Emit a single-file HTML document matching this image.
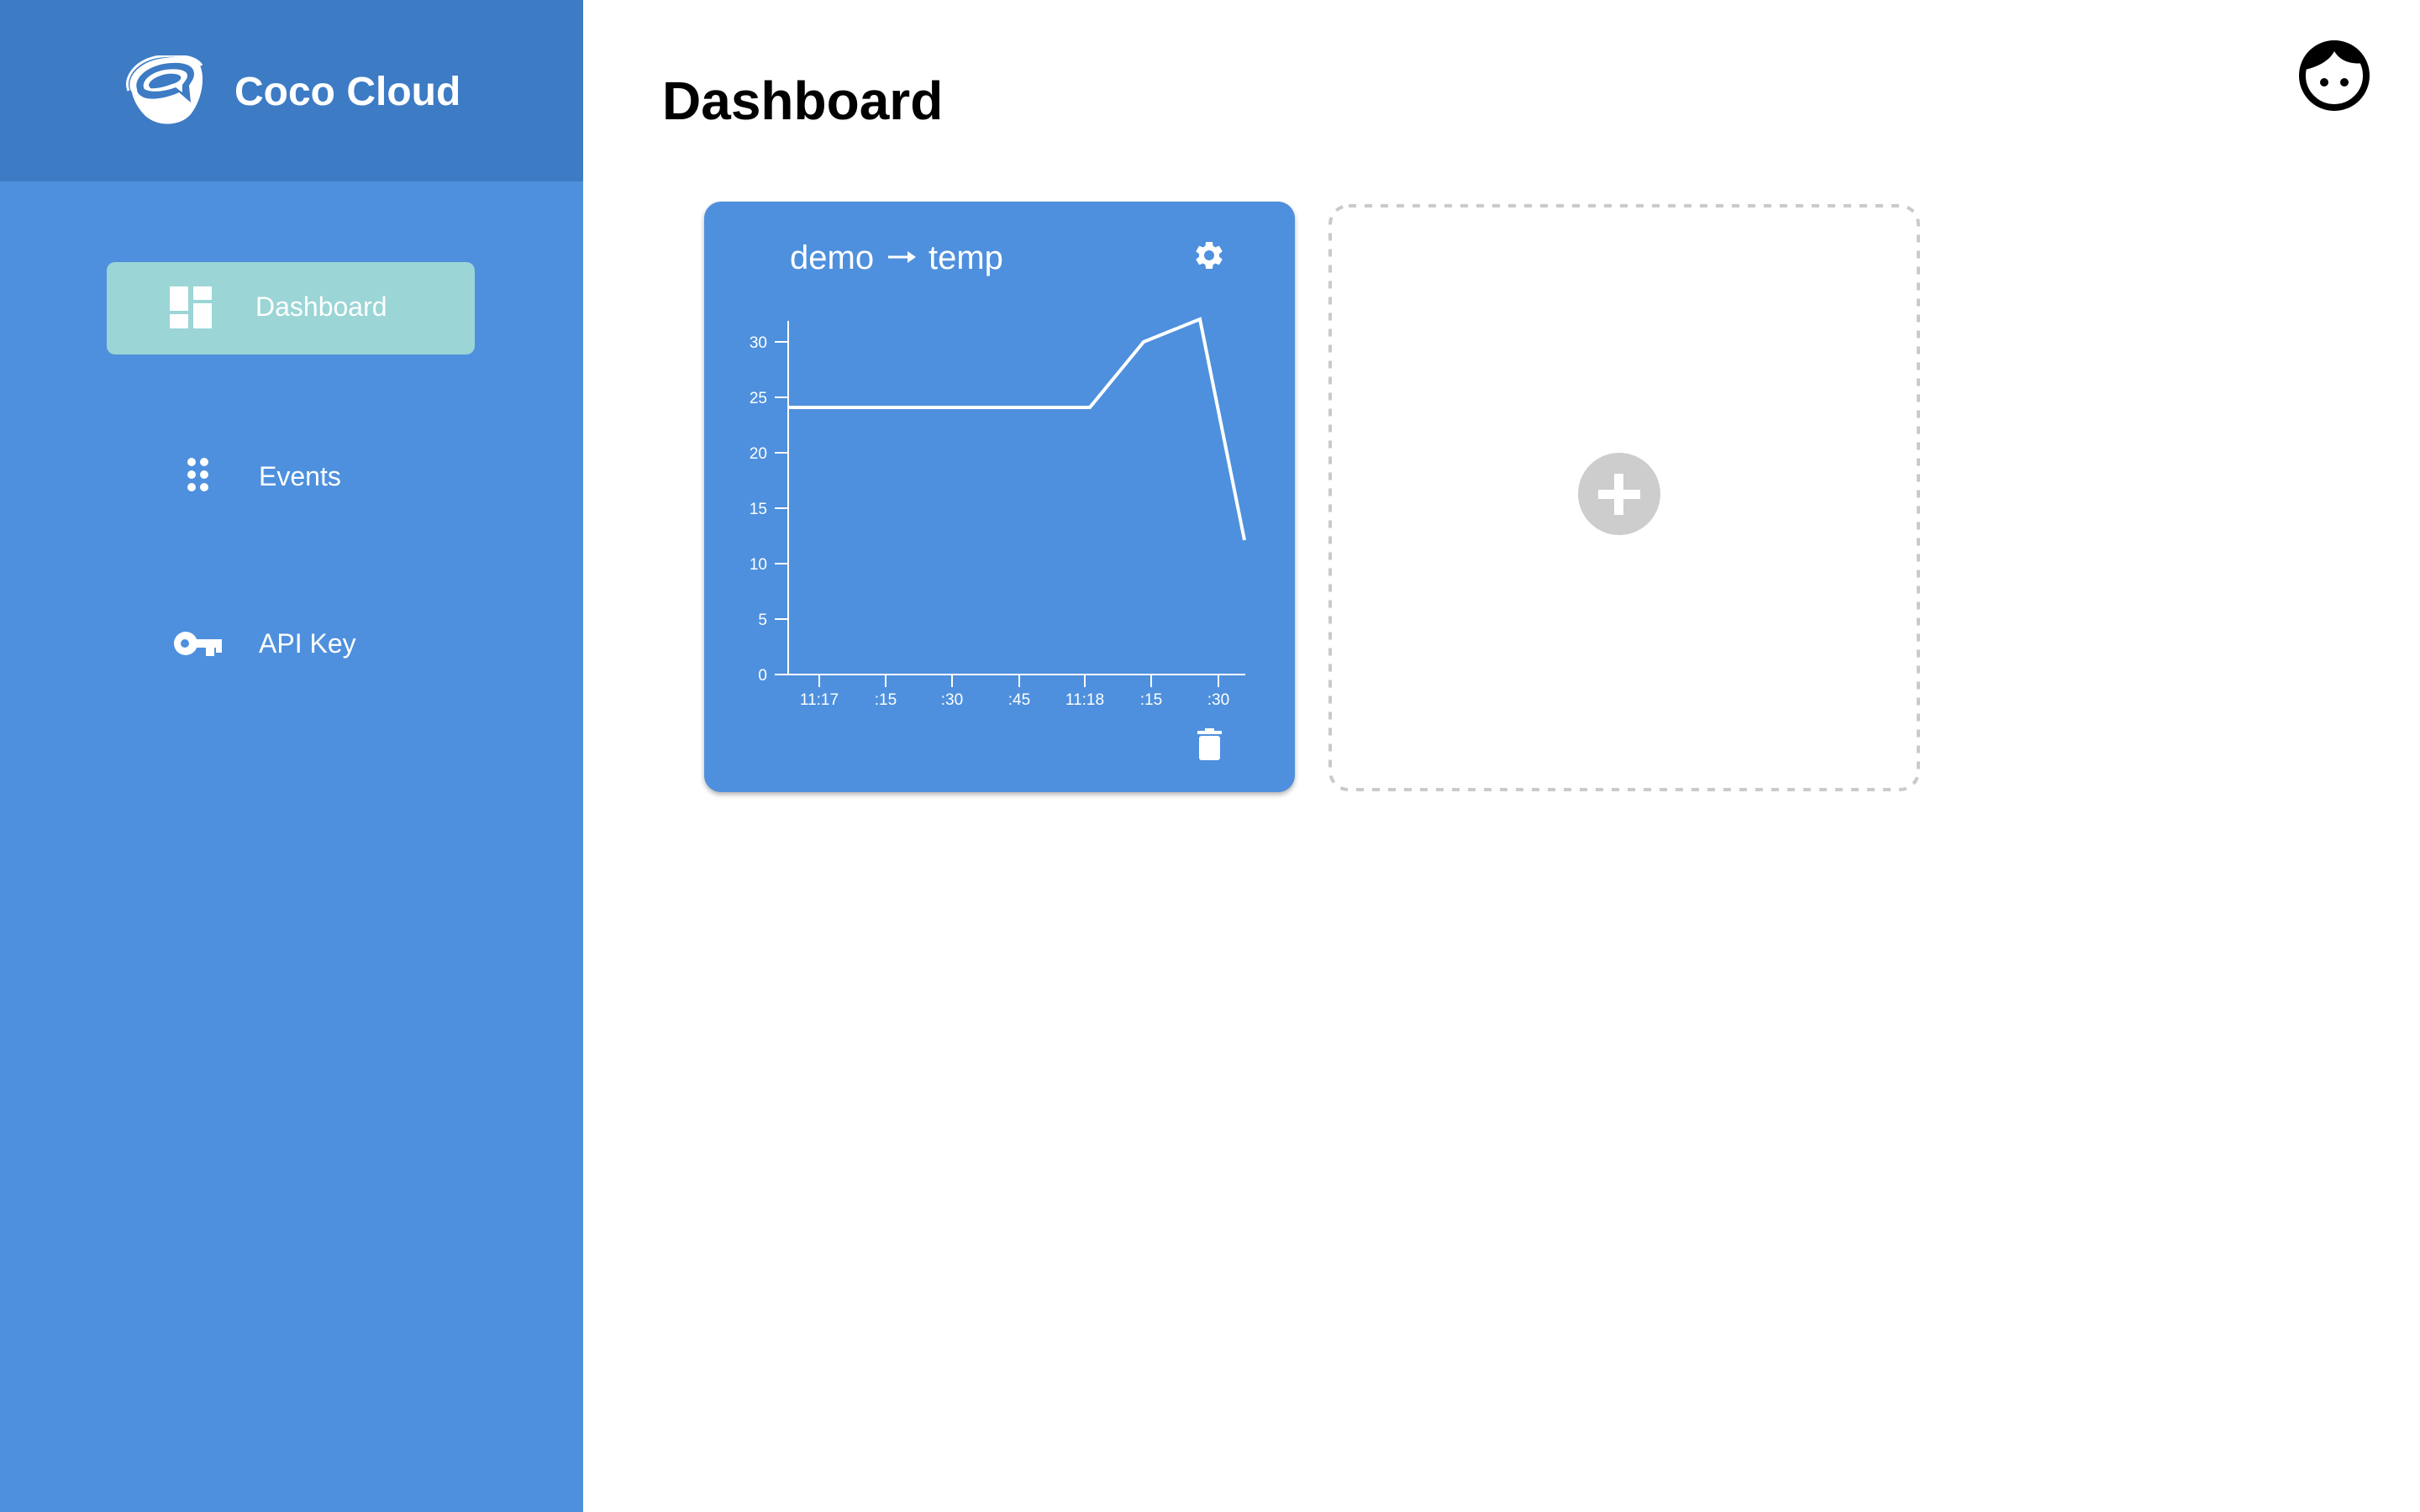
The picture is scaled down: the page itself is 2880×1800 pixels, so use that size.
<!DOCTYPE html>
<html><head><meta charset="utf-8"><style>
*{margin:0;padding:0;box-sizing:border-box}
html,body{width:2880px;height:1800px;overflow:hidden;background:#fff;font-family:"Liberation Sans",sans-serif}
.side{position:absolute;left:0;top:0;width:694px;height:1800px;background:#4e90dd}
.head{position:absolute;left:0;top:0;width:694px;height:216px;background:#3d7bc4}
.brand{position:absolute;left:279px;top:75px;color:#fff;font-weight:bold;font-size:48px;line-height:70px}
.btn{position:absolute;left:127px;top:312px;width:438px;height:110px;background:#9bd5d6;border-radius:10px}
.nav{position:absolute;color:#fff;font-size:32px;line-height:40px}
h1{position:absolute;left:788px;top:80px;font-size:64px;font-weight:bold;color:#000;line-height:80px}
.card{position:absolute;left:838px;top:240px;width:703px;height:703px;background:#4e90dd;border-radius:20px;box-shadow:0 3px 6px rgba(0,0,0,.3)}
</style></head><body>
<div class="side"></div>
<div class="head"></div>
<svg style="position:absolute;left:145px;top:66px" width="104" height="84" viewBox="0 0 104 84">
<path d="M12 44 C4 32 14 12 40 5 C62 0 84 0 92 10 C100 24 96 52 82 70 C70 84 44 86 28 72 C20 64 14 54 12 44 Z" fill="#fff"/>
<path d="M18 40 C14 28 28 14 50 10 C70 7 86 10 86 22 C86 28 82 32 80 36 L82 56 L68 44 C56 50 36 54 26 50 C20 47 18 44 18 40 Z" fill="#3d7bc4"/>
<path d="M26 38 C24 30 34 20 52 17 C68 15 78 18 78 24 C78 28 74 32 72 35 L72 44 L64 38 C54 42 40 44 32 42 C28 41 26 40 26 38 Z" fill="#fff"/>
<path d="M32 36 C32 30 42 24 54 22 C66 21 72 24 70 28 C68 31 64 33 60 34 C50 38 38 40 34 39 Z" fill="#3d7bc4"/>
<path d="M8 42 C2 28 14 8 40 2 C64 -2 88 0 95 12" fill="none" stroke="#fff" stroke-width="3"/>
</svg>
<div class="brand">Coco Cloud</div>
<div class="btn"></div>
<svg style="position:absolute;left:202px;top:341px" width="52" height="51"><rect x="0" y="0" width="22" height="29" fill="#fff"/><rect x="28" y="0" width="22" height="16" fill="#fff"/><rect x="0" y="33" width="22" height="17" fill="#fff"/><rect x="28" y="20" width="22" height="30" fill="#fff"/></svg>
<div class="nav" style="left:304px;top:345px">Dashboard</div>
<svg style="position:absolute;left:220px;top:542px" width="32" height="46" fill="#fff"><circle cx="8" cy="8" r="5"/><circle cx="23" cy="8" r="5"/><circle cx="8" cy="23" r="5"/><circle cx="23" cy="23" r="5"/><circle cx="8" cy="38" r="5"/><circle cx="23" cy="38" r="5"/></svg>
<div class="nav" style="left:308px;top:547px">Events</div>
<svg style="position:absolute;left:207px;top:752px" width="58" height="30"><circle cx="14" cy="14" r="14" fill="#fff"/><circle cx="13" cy="14" r="5" fill="#4e90dd"/><rect x="20" y="9" width="37" height="10" fill="#fff"/><rect x="38" y="9" width="10" height="20" fill="#fff"/><rect x="50" y="9" width="7" height="16" fill="#fff"/></svg>
<div class="nav" style="left:308px;top:746px">API Key</div>
<h1>Dashboard</h1>
<svg style="position:absolute;left:2735px;top:47px" width="86" height="86" viewBox="0 0 86 86">
<circle cx="43" cy="43" r="38" fill="none" stroke="#000" stroke-width="8"/>
<path d="M5 43 A38 38 0 0 1 78 28 C64 30 50 26 43 14 C38 24 26 32 8 36 Z" fill="#000"/>
<circle cx="31" cy="51" r="5" fill="#000"/><circle cx="55" cy="51" r="5" fill="#000"/>
</svg>
<div class="card"></div>
<div style="position:absolute;left:940px;top:282px;color:#fff;font-size:40px;line-height:50px">demo</div>
<svg style="position:absolute;left:1056px;top:296px" width="36" height="20"><line x1="1" y1="10" x2="30" y2="10" stroke="#fff" stroke-width="3"/><path d="M24 3 L34 10 L24 17 Z" fill="#fff"/></svg>
<div style="position:absolute;left:1105px;top:282px;color:#fff;font-size:40px;line-height:50px">temp</div>
<svg style="position:absolute;left:1419px;top:284px" width="40" height="40" viewBox="0 0 24 24"><path fill="#fff" d="M19.14 12.94c.04-.3.06-.61.06-.94 0-.32-.02-.64-.07-.94l2.030-1.58a.49.49 0 0 0 .12-.61l-1.920-3.32a.488.488 0 0 0-.59-.22l-2.390.96c-.5-.38-1.030-.7-1.620-.94l-.36-2.540a.484.484 0 0 0-.48-.41h-3.840c-.24 0-.43.17-.47.41l-.36 2.540c-.59.24-1.130.57-1.620.94l-2.390-.96c-.22-.08-.47 0-.59.22L2.740 8.870c-.12.21-.08.47.12.61l2.030 1.580c-.05.3-.09.63-.09.94s.02.64.07.94l-2.030 1.580a.49.49 0 0 0-.12.61l1.920 3.320c.12.22.37.29.59.22l2.390-.96c.5.38 1.030.7 1.620.94l.36 2.540c.05.24.24.41.48.41h3.840c.24 0 .44-.17.47-.41l.36-2.540c.59-.24 1.130-.56 1.620-.94l2.390.96c.22.08.47 0 .59-.22l1.920-3.320c.12-.22.07-.47-.12-.61l-2.010-1.580zM12 15.6c-1.980 0-3.600-1.620-3.600-3.600s1.620-3.600 3.600-3.600 3.600 1.620 3.600 3.600-1.620 3.600-3.600 3.600z"/></svg>
<svg style="position:absolute;left:0;top:0" width="2880" height="1800">
<g stroke="#fff" stroke-width="2" fill="none">
<line x1="938" y1="382" x2="938" y2="803"/>
<line x1="922" y1="803" x2="1482" y2="803"/>
<line x1="922" y1="407" x2="938" y2="407"/><line x1="922" y1="473" x2="938" y2="473"/><line x1="922" y1="539" x2="938" y2="539"/><line x1="922" y1="605" x2="938" y2="605"/><line x1="922" y1="671" x2="938" y2="671"/><line x1="922" y1="737" x2="938" y2="737"/>
<line x1="975" y1="803" x2="975" y2="818"/><line x1="1054" y1="803" x2="1054" y2="818"/><line x1="1133" y1="803" x2="1133" y2="818"/><line x1="1213" y1="803" x2="1213" y2="818"/><line x1="1291" y1="803" x2="1291" y2="818"/><line x1="1370" y1="803" x2="1370" y2="818"/><line x1="1450" y1="803" x2="1450" y2="818"/>
<polyline stroke-width="4" points="938,485 1297,485 1361,407 1428,380 1481,643"/>
</g>
<g fill="#fff" font-family="Liberation Sans" font-size="19" text-anchor="end">
<text x="913" y="414">30</text><text x="913" y="480">25</text><text x="913" y="546">20</text><text x="913" y="612">15</text><text x="913" y="678">10</text><text x="913" y="744">5</text><text x="913" y="810">0</text>
</g>
<g fill="#fff" font-family="Liberation Sans" font-size="19" text-anchor="middle">
<text x="975" y="839">11:17</text><text x="1054" y="839">:15</text><text x="1133" y="839">:30</text><text x="1213" y="839">:45</text><text x="1291" y="839">11:18</text><text x="1370" y="839">:15</text><text x="1450" y="839">:30</text>
</g>
<g fill="#fff"><rect x="1425" y="870" width="29" height="4"/><rect x="1434" y="867" width="11" height="4"/><rect x="1427" y="876" width="25" height="29" rx="3"/></g>
<rect x="1583" y="245" width="700" height="695" rx="22" fill="none" stroke="#cacaca" stroke-width="4" stroke-dasharray="9 10"/>
<circle cx="1927" cy="588" r="49" fill="#cdcdcd"/>
<rect x="1902" y="583" width="50" height="11" fill="#fff"/><rect x="1921" y="564" width="11" height="49" fill="#fff"/>
</svg>
</body></html>
